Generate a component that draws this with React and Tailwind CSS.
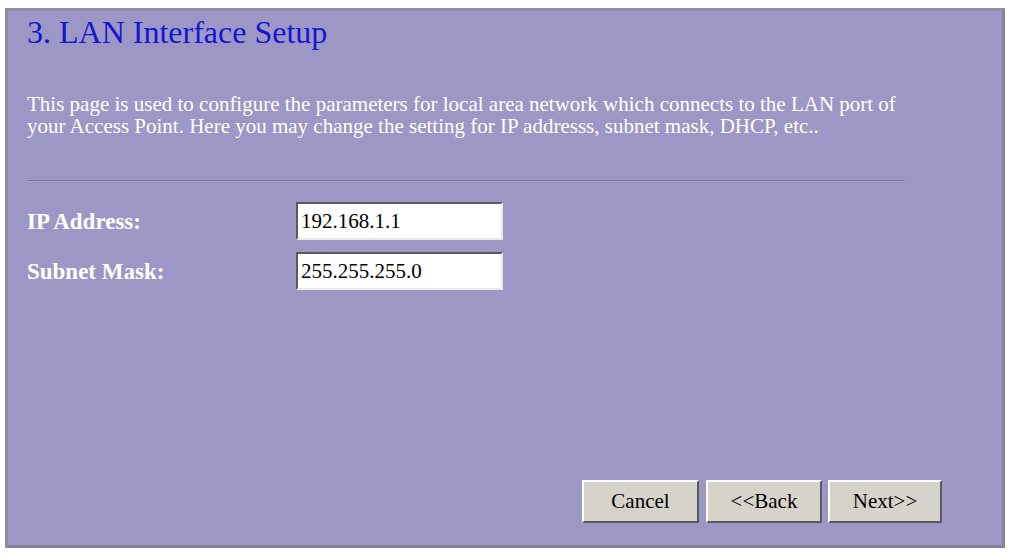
import React from "react";

const serif = { fontFamily: '"Liberation Serif", "DejaVu Serif", serif' };

function Field({ label, value }) {
  return (
    <div className="flex items-center h-[38px]">
      <label className="w-[269px] text-white font-bold text-[23px] leading-none">{label}</label>
      <input
        readOnly
        value={value}
        className="w-[207px] h-[38px] bg-white text-black text-[21px] px-[3px] border-2 border-t-[#5a5a5a] border-l-[#5a5a5a] border-r-[#e8e8e8] border-b-[#e8e8e8] outline-none"
        style={serif}
      />
    </div>
  );
}

function Btn({ w, children }) {
  return (
    <button
      className={`${w} h-[43px] bg-[#d6d3cb] text-black text-[21px] border-2 border-t-white border-l-white border-r-[#5a5a5a] border-b-[#5a5a5a]`}
      style={serif}
    >
      {children}
    </button>
  );
}

export default function App() {
  return (
    <div className="w-[1012px] h-[554px] bg-white pt-[8px] pl-[5px]" style={serif}>
      <div className="w-[1000px] h-[540px] bg-[#9d97c5] border-[3px] border-t-[#8f8ca6] border-l-[#8f8ca6] border-r-[#85839a] border-b-[#85839a] flex flex-col pl-[19px]">
        <h1 className="text-[#1414d2] text-[32px] leading-none mt-[5px]">3. LAN Interface Setup</h1>
        <p className="text-white text-[21px] leading-[22px] mt-[45px] w-[960px]">
          This page is used to configure the parameters for local area network which connects to the LAN port of
          <br />
          your Access Point. Here you may change the setting for IP addresss, subnet mask, DHCP, etc..
        </p>
        <div className="w-[878px] mt-[43px] border-t border-t-[#77739c] border-b border-b-[#aaa5cf]" />
        <div className="flex flex-col gap-[12px] mt-[20px]">
          <Field label="IP Address:" value="192.168.1.1" />
          <Field label="Subnet Mask:" value="255.255.255.0" />
        </div>
        <div className="flex-1" />
        <div className="flex justify-end pr-[60px] mb-[22px]">
          <Btn w="w-[117px]">Cancel</Btn>
          <div className="w-[7px]" />
          <Btn w="w-[116px]">&lt;&lt;Back</Btn>
          <div className="w-[6px]" />
          <Btn w="w-[114px]">Next&gt;&gt;</Btn>
        </div>
      </div>
    </div>
  );
}
